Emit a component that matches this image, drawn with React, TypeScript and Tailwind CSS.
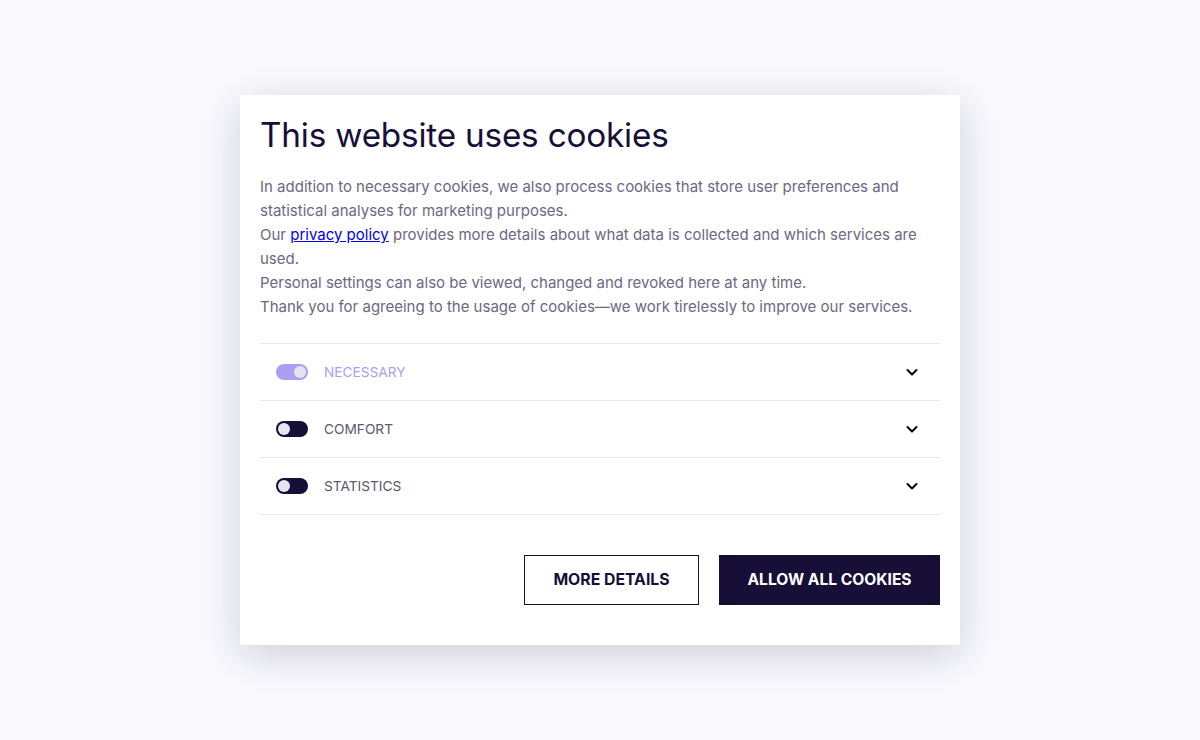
import { useState } from "react";

type Category = {
  id: string;
  label: string;
  locked?: boolean;
};

const categories: Category[] = [
  { id: "necessary", label: "NECESSARY", locked: true },
  { id: "comfort", label: "COMFORT" },
  { id: "statistics", label: "STATISTICS" },
];

function Chevron() {
  return (
    <svg width="14" height="14" viewBox="0 0 14 14" fill="none">
      <path
        d="M2.5 5l4.5 4.5L11.5 5"
        stroke="#000"
        strokeWidth="2"
        strokeLinecap="round"
        strokeLinejoin="round"
      />
    </svg>
  );
}

function Toggle({ on, locked }: { on: boolean; locked?: boolean }) {
  if (locked) {
    return (
      <span className="relative inline-block w-[32px] h-[16px] rounded-full bg-[#ab9ff2]">
        <span className="absolute right-[2px] top-[2px] w-[12px] h-[12px] rounded-full bg-[#e6e4ee]" />
      </span>
    );
  }
  return (
    <span className="relative inline-block w-[32px] h-[16px] rounded-full bg-[#170f38]">
      <span
        className={
          on
            ? "absolute right-[2px] top-[2px] w-[12px] h-[12px] rounded-full bg-[#e6e4ee]"
            : "absolute left-[2px] top-[2px] w-[12px] h-[12px] rounded-full bg-[#e6e4ee]"
        }
      />
    </span>
  );
}

export default function App() {
  const [enabled, setEnabled] = useState<Record<string, boolean>>({
    necessary: true,
    comfort: false,
    statistics: false,
  });

  return (
    <div
      className="w-[1200px] h-[740px] bg-[#f9f9fe] flex justify-center pt-[95px]"
      style={{ fontFamily: "Inter, 'Noto Sans', sans-serif" }}
    >
      <div className="w-[720px] h-[550px] bg-white shadow-[0_10px_40px_rgba(20,15,60,0.18)] px-[20px] pt-[18px]">
        <h1 className="text-[33.3px] leading-[44px] text-[#170f38] tracking-[-0.2px]">
          This website uses cookies
        </h1>

        <p className="mt-[18px] text-[15px] leading-[24px] text-[#6c6880]">
          In addition to necessary cookies, we also process cookies that store user preferences and
          statistical analyses for marketing purposes.
          <br />
          Our{" "}
          <a href="#" className="text-[#0000ee] underline">
            privacy policy
          </a>{" "}
          provides more details about what data is collected and which services are used.
          <br />
          Personal settings can also be viewed, changed and revoked here at any time.
          <br />
          Thank you for agreeing to the usage of cookies—we work tirelessly to improve our services.
        </p>

        <div className="mt-[24px] border-t border-[#e8e8ee]">
          {categories.map((c) => (
            <div
              key={c.id}
              className="h-[57px] border-b border-[#e8e8ee] flex items-center pl-[16px] pr-[21px]"
            >
              <button
                onClick={() =>
                  !c.locked && setEnabled((s) => ({ ...s, [c.id]: !s[c.id] }))
                }
                className="flex"
              >
                <Toggle on={enabled[c.id]} locked={c.locked} />
              </button>
              <span
                className={
                  c.locked
                    ? "ml-[16px] text-[13.7px] text-[#ab9ff2]"
                    : "ml-[16px] text-[13.7px] text-[#5d5a6c]"
                }
              >
                {c.label}
              </span>
              <span className="ml-auto">
                <Chevron />
              </span>
            </div>
          ))}
        </div>

        <div className="mt-[40px] flex justify-end gap-[20px]">
          <button className="w-[175px] h-[50px] border border-[#170f38] text-[#170f38] text-[15.8px] font-bold">
            MORE DETAILS
          </button>
          <button className="w-[221px] h-[50px] bg-[#170f38] text-white text-[15.6px] font-bold">
            ALLOW ALL COOKIES
          </button>
        </div>
      </div>
    </div>
  );
}
